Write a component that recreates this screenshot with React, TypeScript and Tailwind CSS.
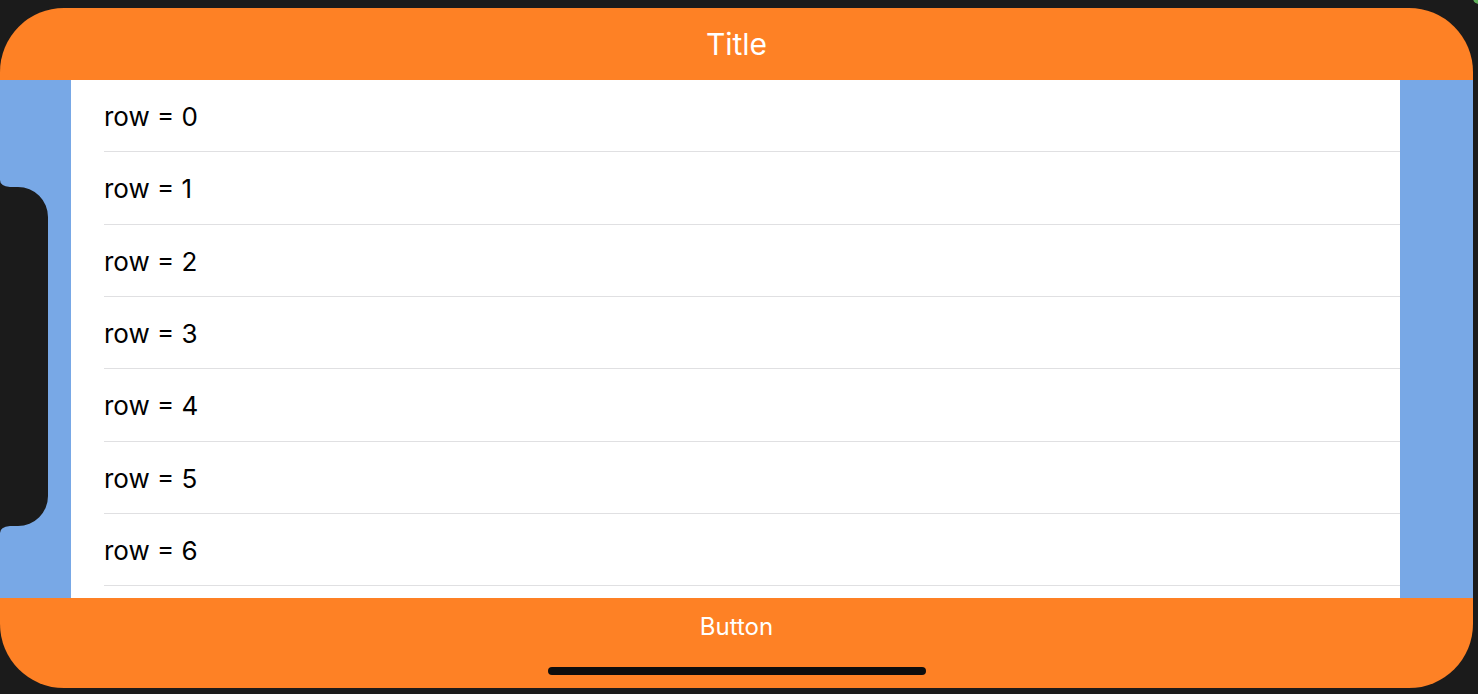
import React from "react";

const rows = [0, 1, 2, 3, 4, 5, 6];

export default function App() {
  return (
    <div className="relative w-[1478px] h-[694px] bg-[#1b1b1b] overflow-hidden" style={{ fontFamily: 'Inter, "Noto Sans", sans-serif' }}>
      <div className="absolute left-[1473px] top-[-8px] w-[14px] h-[12px] rounded-full bg-[#5fae5a]" />
      <div className="pt-[8px]">
        <div className="relative w-[1473px] h-[680px] rounded-[64px] overflow-hidden flex flex-col">
          <div className="h-[72px] bg-[#fe8125] flex items-center justify-center">
            <span className="text-white text-[30px] leading-none">Title</span>
          </div>
          <div className="flex-1 flex min-h-0">
            <div className="w-[71px] bg-[#78a8e6]" />
            <div className="flex-1 bg-white overflow-hidden">
              {rows.map((r) => (
                <div key={r} className="pl-[33px] h-[72.33px]">
                  <div className="h-full border-b border-[#e0e0e2] flex items-center text-[26px] leading-none text-black pt-[3px]">
                    row = {r}
                  </div>
                </div>
              ))}
              <div className="h-[72px]" />
            </div>
            <div className="w-[73px] bg-[#78a8e6]" />
          </div>
          <div className="h-[90px] bg-[#fe8125] flex flex-col items-center">
            <div className="mt-[15px] text-white text-[24px] leading-[28px]">Button</div>
            <div className="mt-[26px] w-[378px] h-[8px] rounded-full bg-[#0d0d0d]" />
          </div>
          <svg className="absolute left-0 top-[172px]" width="50" height="353" viewBox="0 0 50 353">
            <path d="M0,0 Q0,6 10,7 L18,7 A30,30 0 0 1 48,37 L48,316 A30,30 0 0 1 18,346 L10,346 Q0,347 0,353 Z" fill="#1b1b1b" />
          </svg>
        </div>
      </div>
    </div>
  );
}
